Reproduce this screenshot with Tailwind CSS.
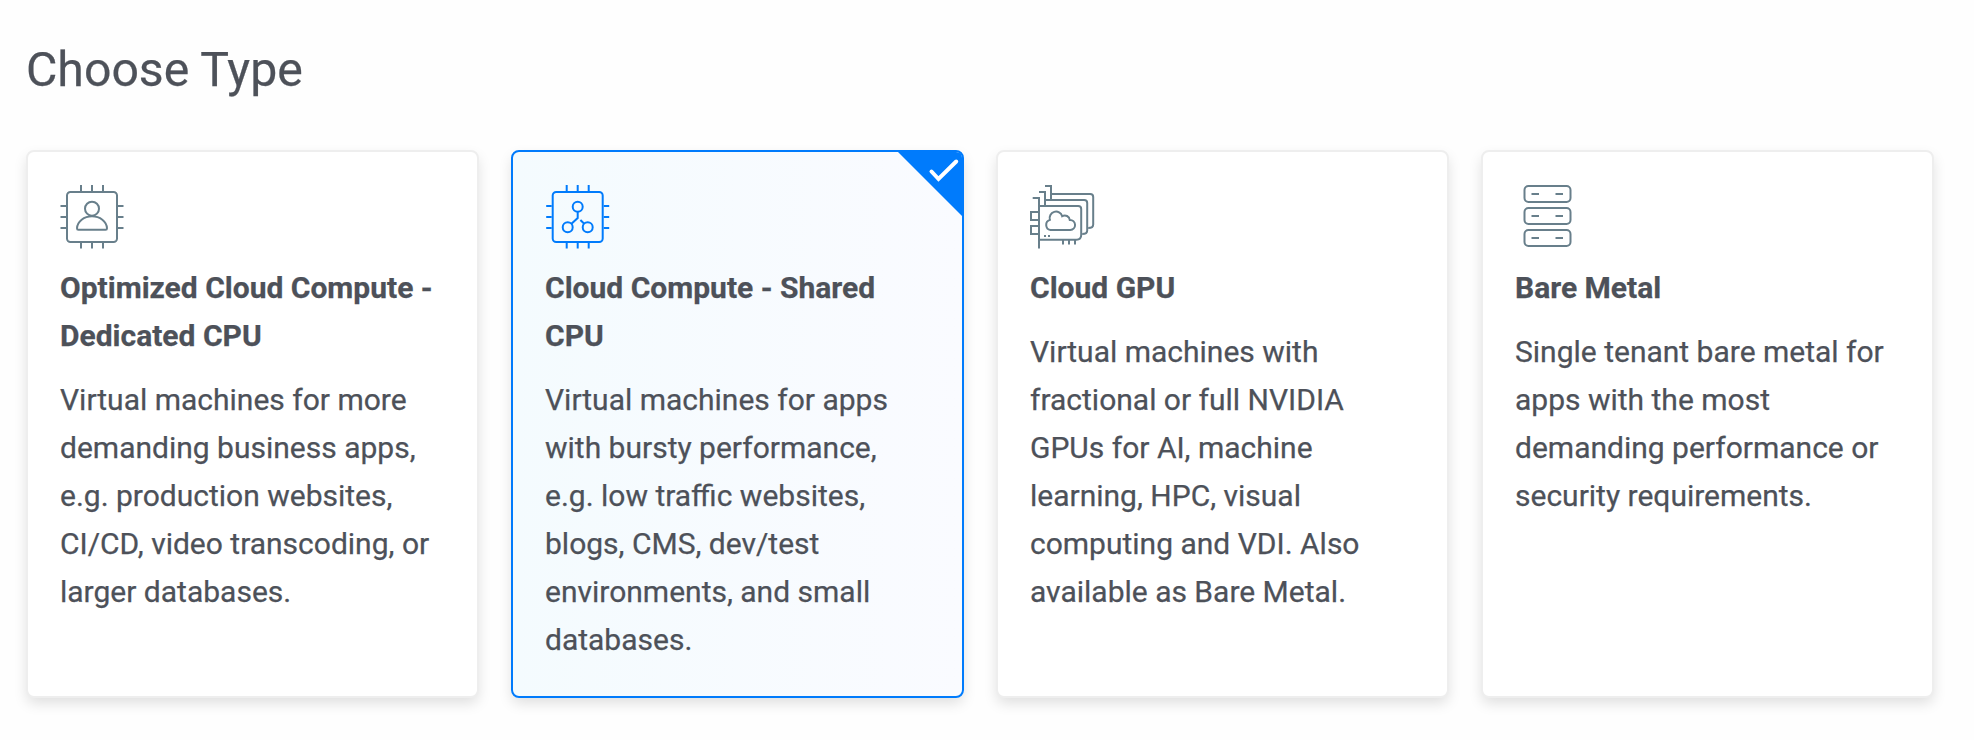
<!DOCTYPE html>
<html lang="en">
<head>
<meta charset="utf-8">
<title>Choose Type</title>
<script src="https://cdn.jsdelivr.net/npm/@tailwindcss/browser@4"></script>
</head>
<body class="h-[740px] overflow-hidden bg-[#fefefe] pt-[38px] pr-[40px] pl-[26px] font-[Roboto,sans-serif] text-[30px] leading-[48px] text-[#4d5159] [-webkit-text-stroke:0.25px_#4d5159]">
<h1 class="h-16 text-[48.2px] leading-[64px]">Choose Type</h1>
<main class="mt-12 grid h-[548px] grid-cols-4 gap-8">
  <section class="rounded-lg border-2 border-[#eeeeee] bg-white px-8 pt-8 shadow-[0_6px_14px_-1px_rgba(0,0,0,0.13)]">
    <svg class="h-20 w-16 overflow-visible text-[#687f8b]" viewBox="0 0 64 80" fill="none" stroke="currentColor" stroke-width="2">
      <rect x="7" y="8" width="50" height="50" rx="3.5"/>
      <path d="M21 1v6M32 1v6M43 1v6M21 59v5.500M32 59v5.500M43 59v5.500M.5 22H6M.5 33H6M.5 44H6M58 22h5.500M58 33h5.500M58 44h5.500"/>
      <circle cx="32" cy="24.7" r="7"/>
      <path d="M18.4 45.7h27.2q1.4 0 1.4-1.5C46.600 37.500 40 32.300 32 32.300S17.400 37.500 17 44.200q0 1.500 1.400 1.500z"/>
    </svg>
    <h2 class="font-bold whitespace-nowrap">Optimized Cloud Compute -<br>Dedicated CPU</h2>
    <p class="mt-4 whitespace-nowrap">Virtual machines for more<br>demanding business apps,<br>e.g. production websites,<br>CI/CD, video transcoding, or<br>larger databases.</p>
  </section>
  <section class="relative rounded-lg border-2 border-[#007bfc] bg-linear-to-r from-[#f4fbfe] to-[#fafbff] px-8 pt-8 shadow-[0_6px_14px_-1px_rgba(0,0,0,0.13)]">
    <svg class="absolute top-0 right-0 size-16" viewBox="0 0 64 64" fill="none">
      <path d="M0 0H58Q64 0 64 6V64z" fill="#007bfc"/>
      <path d="M33.500 19.500l7 7.500L58.200 9.500" stroke="#fff" stroke-width="4"  stroke-linecap="round"/>
    </svg>
    <svg class="h-20 w-16 overflow-visible text-[#007bfc]" viewBox="-0.700 0 64 80" fill="none" stroke="currentColor" stroke-width="2">
      <rect x="7" y="8" width="50" height="50" rx="3.5"/>
      <path d="M21 1v6M32 1v6M43 1v6M21 59v5.500M32 59v5.500M43 59v5.500M.5 22H6M.5 33H6M.5 44H6M58 22h5.500M58 33h5.500M58 44h5.500"/>
      <circle cx="32" cy="22.700" r="5"/>
      <circle cx="22" cy="43.300" r="5"/>
      <circle cx="42" cy="43.300" r="5"/>
      <path d="M32 27.700v6.300l-6.500 6M34.700 36l3.800 3.700"/>
    </svg>
    <h2 class="font-bold whitespace-nowrap">Cloud Compute - Shared<br>CPU</h2>
    <p class="mt-4 whitespace-nowrap">Virtual machines for apps<br>with bursty performance,<br>e.g. low traffic websites,<br>blogs, CMS, dev/test<br>environments, and small<br>databases.</p>
  </section>
  <section class="rounded-lg border-2 border-[#eeeeee] bg-white px-8 pt-8 shadow-[0_6px_14px_-1px_rgba(0,0,0,0.13)]">
    <svg class="h-20 w-16 overflow-visible text-[#687f8b]" viewBox="0 0 64 80" fill="none" stroke="currentColor" stroke-width="2">
      <path d="M2.700 14H9v50.500M9 22h39.200q3 0 3 3v26q0 4.700-4.700 4.700H9M9 28H1v8h8M9 42H1v8h8"/>
      <path d="M9 8h6v14M15 16h39.200q3 0 3 3v27.500q0 3.500-5 3.500"/>
      <path d="M15 2h6v14M21 10h39.200q3 0 3 3v27.500q0 3.500-5 3.500"/>
      <path d="M33 56v4.500M39 56v4.500M45 56v4.500"/>
      <path d="M20.500 46a5.200 5.200 0 0 1-.6-10.100A6.300 6.300 0 0 1 32.200 32.200A5 5 0 0 1 39.800 36A5 5 0 0 1 40.300 46z"/>
      <path d="M14 52h2M18 52h2"/>
    </svg>
    <h2 class="font-bold whitespace-nowrap">Cloud GPU</h2>
    <p class="mt-4 whitespace-nowrap">Virtual machines with<br>fractional or full NVIDIA<br>GPUs for AI, machine<br>learning, HPC, visual<br>computing and VDI. Also<br>available as Bare Metal.</p>
  </section>
  <section class="rounded-lg border-2 border-[#eeeeee] bg-white px-8 pt-8 shadow-[0_6px_14px_-1px_rgba(0,0,0,0.13)]">
    <svg class="h-20 w-16 overflow-visible text-[#687f8b]" viewBox="-0.500 0 64 80" fill="none" stroke="currentColor" stroke-width="2">
      <rect x="9" y="2" width="46" height="16" rx="4"/>
      <rect x="9" y="24" width="46" height="16" rx="4"/>
      <rect x="9" y="46" width="46" height="16" rx="4"/>
      <path d="M16 10h7.500M40 10h7.500M16 32h7.500M40 32h7.500M16 54h7.500M40 54h7.500"/>
    </svg>
    <h2 class="font-bold whitespace-nowrap">Bare Metal</h2>
    <p class="mt-4 whitespace-nowrap">Single tenant bare metal for<br>apps with the most<br>demanding performance or<br>security requirements.</p>
  </section>
</main>
</body>
</html>
